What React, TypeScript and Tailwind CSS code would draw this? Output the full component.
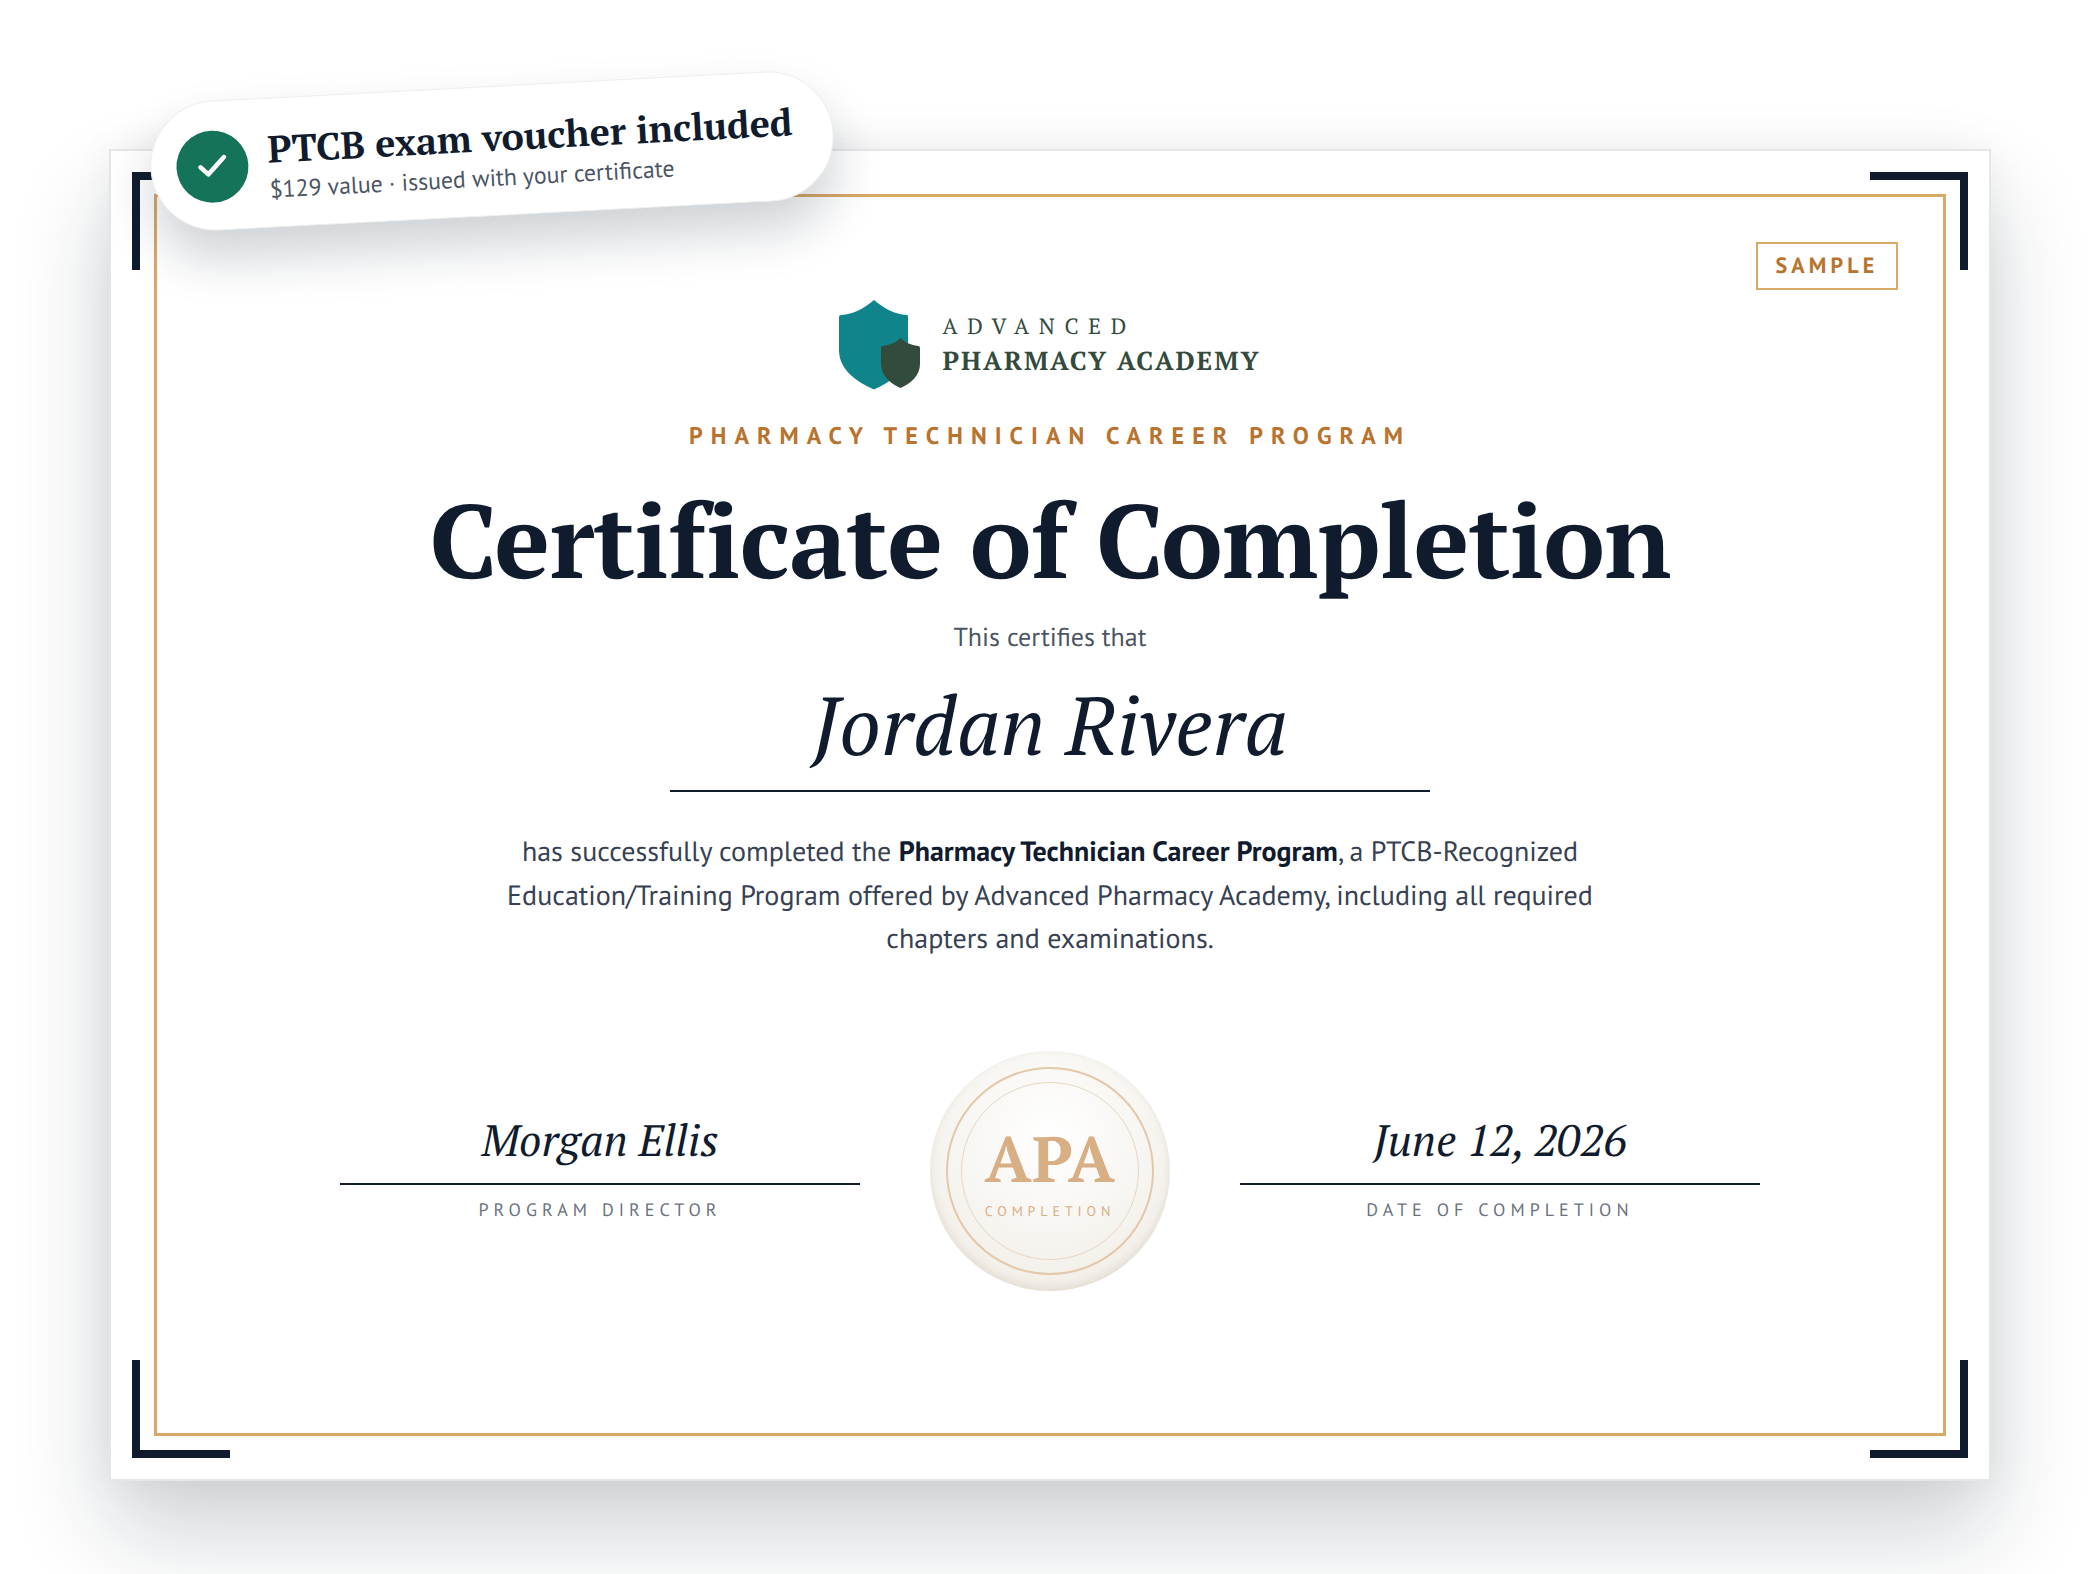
import React from 'react';
import { Check } from 'lucide-react';

function Signature({ name, label }: { name: string; label: string }) {
  return (
    <div className="w-[520px] flex flex-col items-center">
      <div className='font-["PT_Serif","Liberation_Serif",serif] italic text-[44px] leading-[60px] text-[#101c2e] w-full text-center pb-[13px] border-b-2 border-[#101c2e]'>
        {name}
      </div>
      <div className='font-["PT_Sans",Lato,sans-serif] mt-[14px] text-[18px] leading-[22px] tracking-[0.28em] text-[#6b7280]'>
        {label}
      </div>
    </div>
  );
}

function Seal() {
  return (
    <div className="relative w-[240px] h-[240px] shrink-0 rounded-full flex flex-col items-center justify-center pt-[2px] bg-[radial-gradient(circle_at_50%_35%,#ffffff_0%,#f7f5f1_50%,#f0ece4_90%,#ebe7de_100%)] shadow-[inset_0_-3px_8px_rgba(120,100,70,0.14)]">
      <div className="absolute inset-[16px] rounded-full border-2 border-[#e3c8aa]" />
      <div className="absolute inset-[31px] rounded-full border border-[#e8d6c2]" />
      <div className='font-["PT_Serif","Liberation_Serif",serif] font-bold text-[64px] leading-[70px] tracking-[0.01em] text-[#d8ae85]'>APA</div>
      <div className='font-["PT_Sans",Lato,sans-serif] mt-[8px] text-[14px] leading-[18px] tracking-[0.35em] text-[#d8ae85]'>COMPLETION</div>
    </div>
  );
}

function Logo() {
  return (
    <svg width="82" height="90" viewBox="0 0 82 90" className="shrink-0">
      <path d="M35 0 C 46 9 55 14 68 15 Q 69 15 69 17 L 69 50 C 69 70 52 82 35 89.5 C 18 82 0 70 0 50 L 0 17 Q 0 15 2 15 C 15 14 24 9 35 0 Z" fill="#0f848a" />
      <path d="M61.5 38 C 67 43 72 45 79 46 Q 81 46 81 48 L 81 64 C 81 76 71 84 61.5 88 C 52 84 42 76 42 64 L 42 48 Q 42 46 44 46 C 51 45 56 43 61.5 38 Z" fill="#334b3c" />
    </svg>
  );
}

export default function App() {
  return (
    <div className="w-[2100px] h-[1574px] overflow-hidden bg-white pl-[109px] pt-[149px] [text-rendering:geometricPrecision]">
      <div className="relative w-[1882px] h-[1332px] bg-white border-2 border-[#e4e6e8] shadow-[0_50px_90px_rgba(16,28,46,0.2),0_0_40px_rgba(16,28,46,0.05)]">
        {/* frame and corners */}
        <div className="absolute left-[43px] top-[43px] right-[43px] bottom-[43px] border-[3px] border-[#d8a866]" />
        <div className="absolute left-[21px] top-[21px] w-[98px] h-[98px] border-l-8 border-t-8 border-[#101c2e]" />
        <div className="absolute right-[21px] top-[21px] w-[98px] h-[98px] border-r-8 border-t-8 border-[#101c2e]" />
        <div className="absolute left-[21px] bottom-[21px] w-[98px] h-[98px] border-l-8 border-b-8 border-[#101c2e]" />
        <div className="absolute right-[21px] bottom-[21px] w-[98px] h-[98px] border-r-8 border-b-8 border-[#101c2e]" />

        <div className='absolute right-[91px] top-[91px] w-[142px] h-[48px] flex items-center justify-center border-2 border-[#d8a866] font-["PT_Sans",Lato,sans-serif] font-bold text-[22px] tracking-[0.19em] text-[#b8742f]'>
          SAMPLE
        </div>

        {/* voucher pill */}
        <div className="absolute left-[39px] top-[-65px] w-[684px] h-[130px] -rotate-3 rounded-full bg-white border border-[#eceeef] shadow-[0_28px_50px_rgba(16,28,46,0.2)] flex items-center gap-[20px] pl-[25px]">
          <div className="mt-[2px] w-[72px] h-[72px] shrink-0 rounded-full bg-[#147358] flex items-center justify-center">
            <Check className="w-[36px] h-[36px] text-white" strokeWidth={3} />
          </div>
          <div className="flex flex-col pt-[3px]">
            <div className='font-["PT_Serif","Liberation_Serif",serif] font-bold text-[37.7px] leading-[48px] text-[#101c2e] whitespace-nowrap'>PTCB exam voucher included</div>
            <div className='mt-[2px] font-["PT_Sans",Lato,sans-serif] text-[23.8px] leading-[30px] text-[#4b5563] whitespace-nowrap'>$129 value · issued with your certificate</div>
          </div>
        </div>

        {/* certificate body */}
        <div className="flex flex-col items-center pt-[149px]">
          <div className="flex items-center gap-[21px]">
            <Logo />
            <div className="flex flex-col text-[#334b3c]">
              <div className='font-["PT_Serif","Liberation_Serif",serif] text-[22px] leading-[30px] tracking-[0.44em]'>ADVANCED</div>
              <div className='font-["PT_Serif","Liberation_Serif",serif] font-bold text-[26px] leading-[36px] tracking-[0.075em] translate-y-[1px]'>PHARMACY ACADEMY</div>
            </div>
          </div>
          <div className='mt-[30px] font-["PT_Sans",Lato,sans-serif] font-bold text-[24px] leading-[32px] tracking-[0.335em] text-[#b8742f]'>
            PHARMACY TECHNICIAN CAREER PROGRAM
          </div>
          <h1 className='mt-[22px] font-["PT_Serif","Liberation_Serif",serif] font-bold text-[104px] leading-[130px] tracking-[-0.75px] text-[#101c2e]'>
            Certificate of Completion
          </h1>
          <div className='mt-[18px] font-["PT_Sans",Lato,sans-serif] text-[26px] leading-[32px] text-[#4b5563]'>This certifies that</div>
          <div className="mt-[14px] w-[760px] pb-[8px] border-b-2 border-[#101c2e] text-center">
            <span className='font-["PT_Serif","Liberation_Serif",serif] italic text-[82px] leading-[114px] text-[#101c2e]'>Jordan Rivera</span>
          </div>
          <p className='mt-[37px] w-[1100px] text-center font-["PT_Sans",Lato,sans-serif] text-[28px] leading-[43.5px] text-[#374151]'>
            has successfully completed the <strong className="font-bold text-[#101c2e]">Pharmacy Technician Career Program</strong>, a PTCB-Recognized Education/Training Program offered by Advanced Pharmacy Academy, including all required chapters and examinations.
          </p>
          <div className="mt-[91px] flex items-start gap-[70px]">
            <div className="pt-[59px]"><Signature name="Morgan Ellis" label="PROGRAM DIRECTOR" /></div>
            <Seal />
            <div className="pt-[59px]"><Signature name="June 12, 2026" label="DATE OF COMPLETION" /></div>
          </div>
        </div>
      </div>
    </div>
  );
}
